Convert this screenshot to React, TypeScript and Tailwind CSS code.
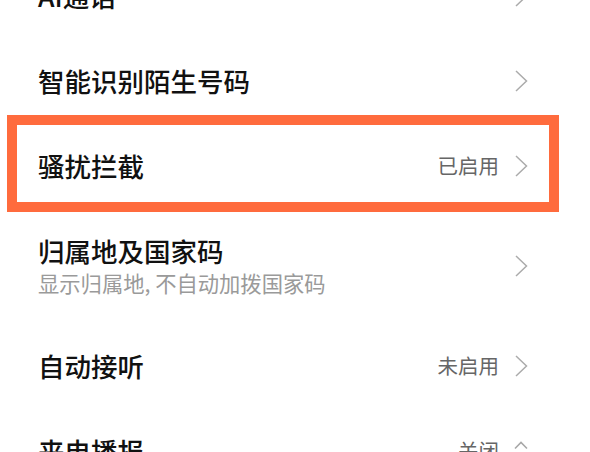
import type { ReactNode } from 'react';

function Chevron({ up = false }: { up?: boolean }) {
  if (up) {
    return (
      <svg width="14" height="22" viewBox="0 0 14 22" className="shrink-0 -mt-[4px]">
        <path d="M1 10.5 L7 4.5 L13 10.5" fill="none" stroke="#a8a8a8" strokeWidth="1.6" />
      </svg>
    );
  }
  return (
    <svg width="14" height="22" viewBox="0 0 14 22" className="shrink-0">
      <path d="M2 1 L12.5 11 L2 21" fill="none" stroke="#ababab" strokeWidth="1.5" />
    </svg>
  );
}

interface RowProps {
  title: string;
  subtitle?: string;
  value?: string;
  up?: boolean;
  children?: ReactNode;
}

function Row({ title, subtitle, value, up, children }: RowProps) {
  return (
    <div
      className={`relative flex items-center pl-[38px] pr-[62px] ${subtitle ? 'h-[115px]' : 'h-[85px]'}`}
    >
      {children}
      <div className="flex-1 flex flex-col">
        <span className="text-[26.5px] leading-[34px] font-medium text-[#111]">{title}</span>
        {subtitle && (
          <span className="text-[21.3px] leading-[30px] text-[#9a9a9a]">{subtitle}</span>
        )}
      </div>
      {value && <span className="text-[20.5px] text-[#666] mr-[15px]">{value}</span>}
      <Chevron up={up} />
    </div>
  );
}

export default function App() {
  return (
    <div
      className="w-[590px] h-[452px] overflow-hidden bg-white"
      style={{ fontFamily: '"Noto Sans CJK SC", "Noto Sans", sans-serif' }}
    >
      <div className="-mt-[47px] flex flex-col">
        <Row title="AI通话" />
        <Row title="智能识别陌生号码" />
        <Row title="骚扰拦截" value="已启用">
          <div className="absolute left-[7px] right-[31px] -top-[8px] -bottom-[4px] border-[10px] border-[#ff6b3d] pointer-events-none" />
        </Row>
        <Row title="归属地及国家码" subtitle="显示归属地, 不自动加拨国家码" />
        <Row title="自动接听" value="未启用" />
        <Row title="来电播报" value="关闭" up />
      </div>
    </div>
  );
}
